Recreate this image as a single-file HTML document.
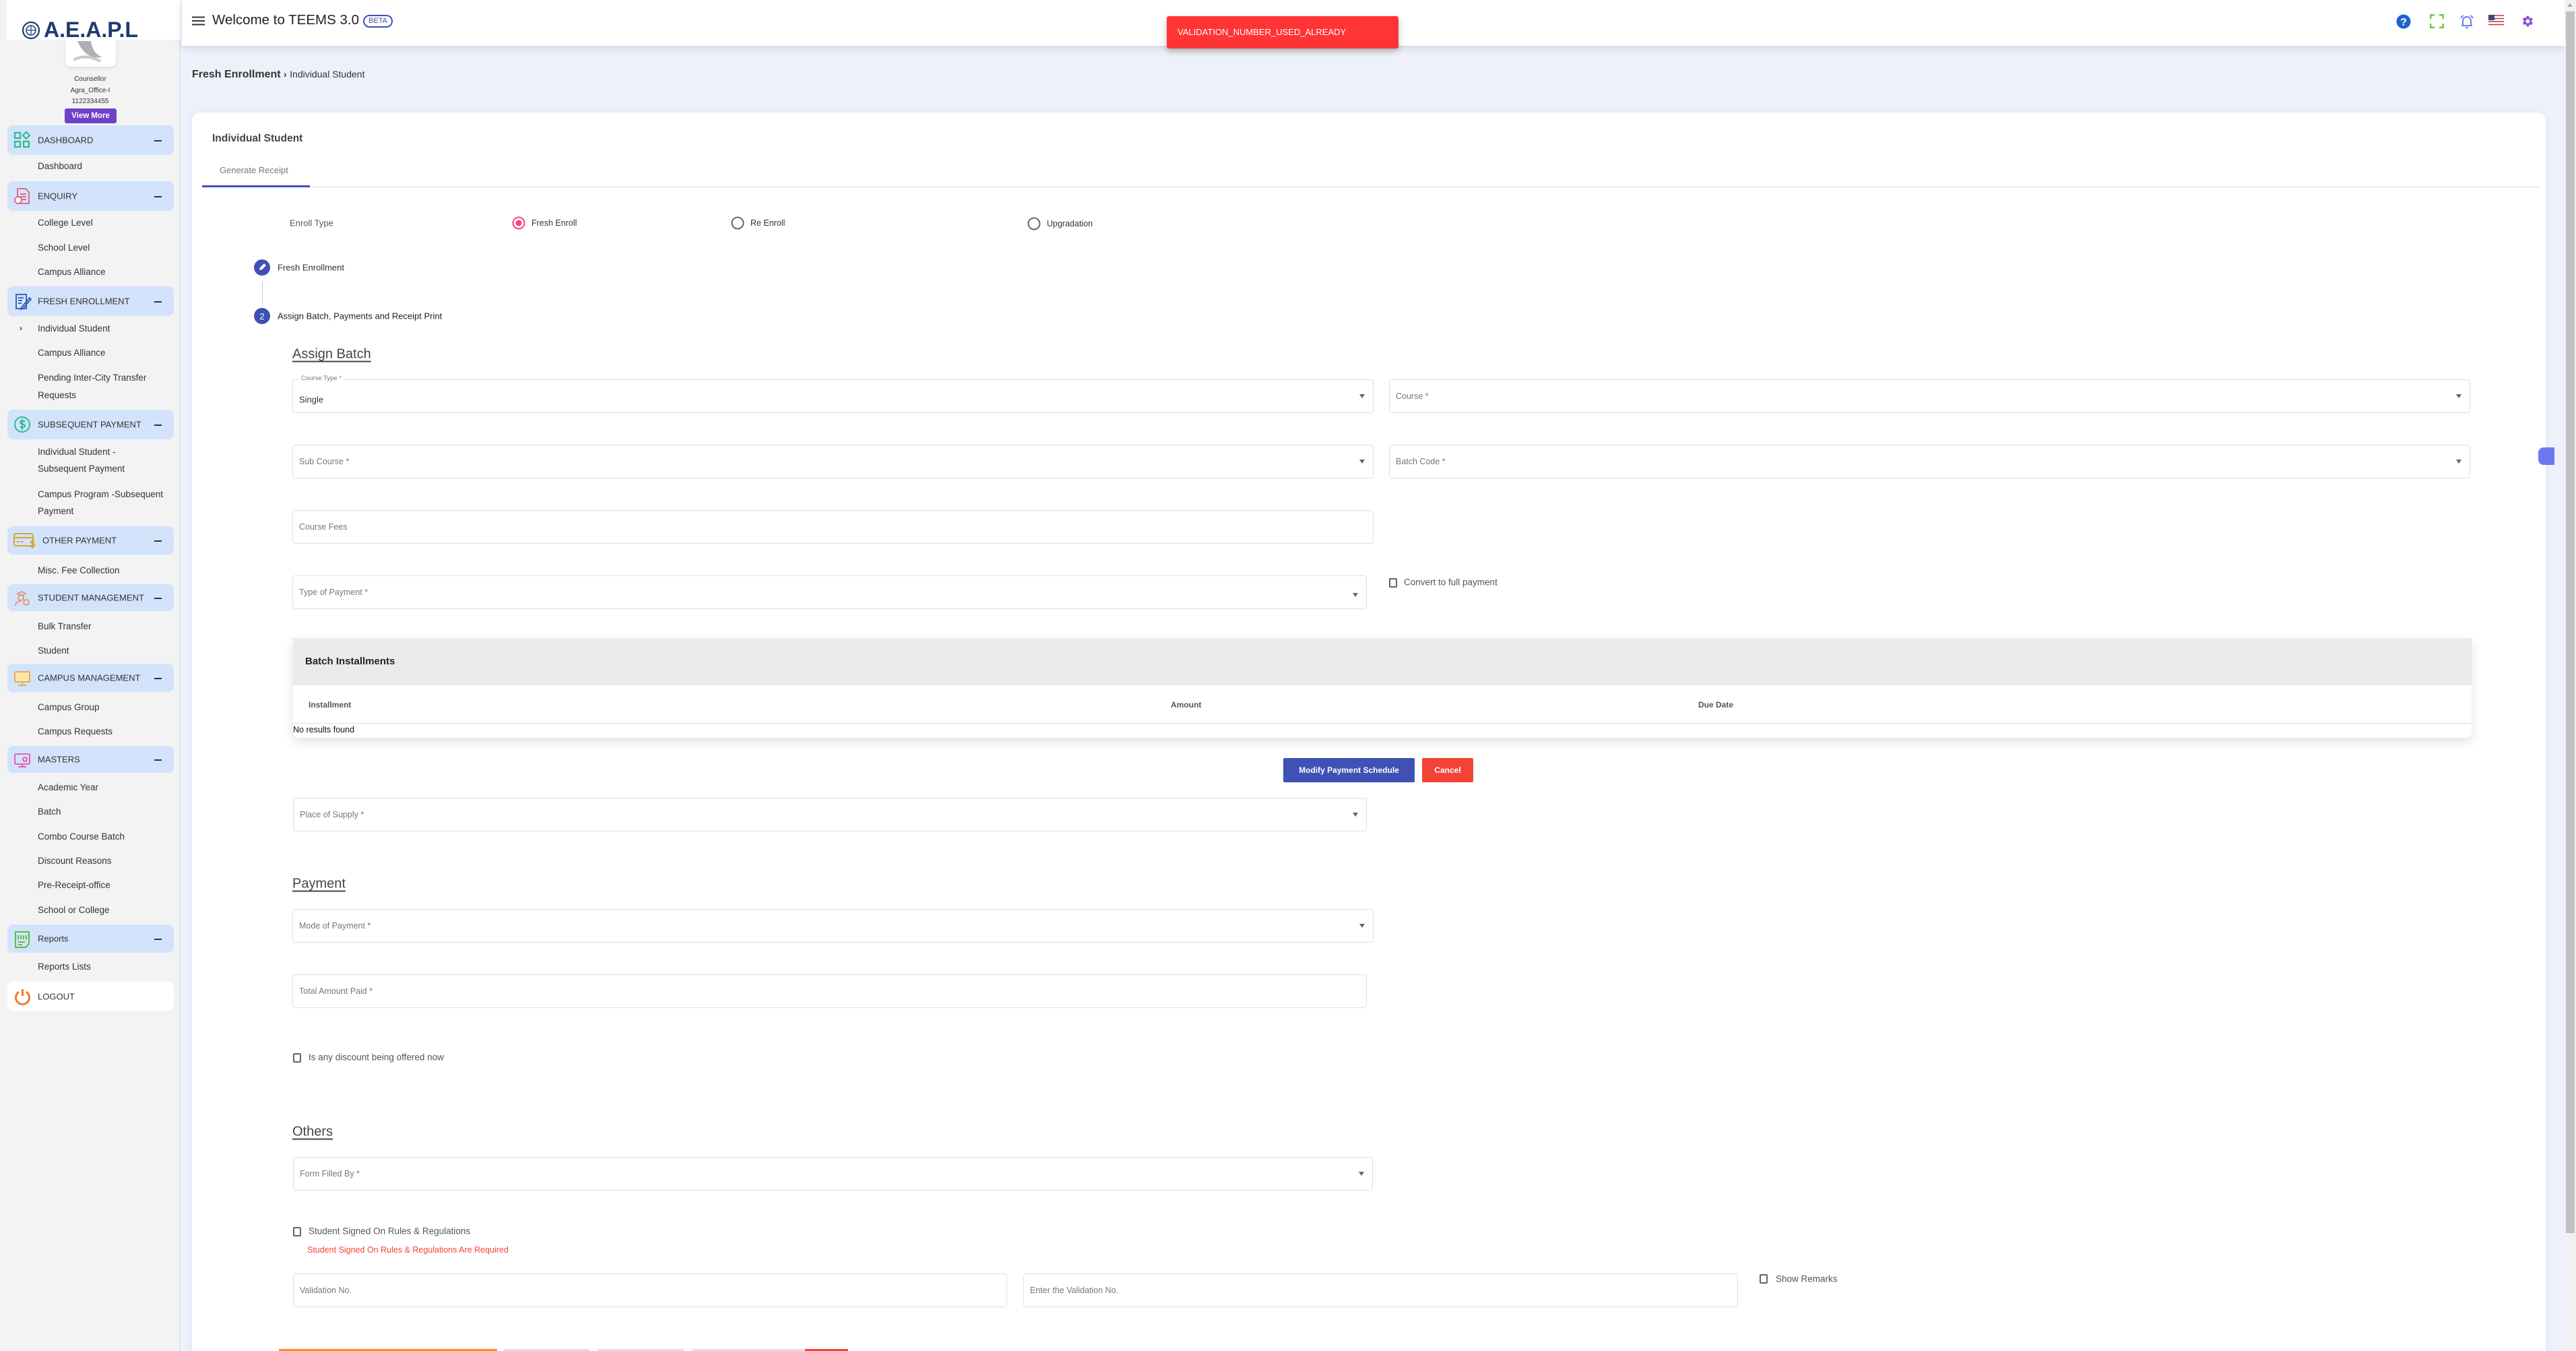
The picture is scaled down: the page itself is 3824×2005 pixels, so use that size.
<!DOCTYPE html>
<html><head><meta charset="utf-8">
<style>
*{box-sizing:border-box;margin:0;padding:0}
html{width:3824px;height:2005px;overflow:hidden}
body{width:3824px;height:2005px;overflow:hidden;position:relative;background:#eef1f9;font-family:"Liberation Sans",Arial,sans-serif;color:#333}
.a{position:absolute}
.sb{position:absolute;left:0;top:0;width:268px;height:2005px;background:#f3f3f3;border-right:2px solid #e3e6ef}
.hd{position:absolute;left:11px;width:247px;height:44px;background:#d3e3fc;border-radius:8px;font-size:13px;color:#333}
.hd span.t{position:absolute;left:45px;top:50%;transform:translateY(-50%)}
.hd span.m{position:absolute;right:18px;top:50%;width:11px;height:2px;background:#333}
.hd svg{position:absolute;left:9px;top:9px}
.it{position:absolute;left:56px;font-size:13.5px;color:#333;line-height:24px;transform:translateY(-12px)}
.f{position:absolute;border:1.5px solid #e0e0e0;border-radius:4px;background:#fff;height:50px}
.f .l{position:absolute;left:9px;top:50%;transform:translateY(-50%);font-size:12.5px;color:#777}
.f .ar{position:absolute;right:12px;top:21px;width:0;height:0;border-left:4px solid transparent;border-right:4px solid transparent;border-top:6px solid #666}
.cb{position:absolute;width:12px;height:14px;border:2px solid #666;border-radius:2px;background:#fff}
.ct{position:absolute;font-size:13px;color:#555;transform:translateY(-50%)}
h3.sec{position:absolute;left:434px;font-size:20px;font-weight:normal;color:#444;text-decoration:underline;text-underline-offset:4px;transform:translateY(-50%)}
</style></head><body>

<!-- Sidebar -->
<div class="sb"></div>
<div class="a" style="left:10px;top:0;width:258px;height:59px;background:#fff"></div>
<svg class="a" style="left:32px;top:31px" width="28" height="28" viewBox="0 0 28 28"><circle cx="14" cy="14" r="12" fill="none" stroke="#1e3a6e" stroke-width="2.2"/><circle cx="14" cy="14" r="7" fill="none" stroke="#1e3a6e" stroke-width="1.5"/><path d="M8 14h12M14 8v12" stroke="#1e3a6e" stroke-width="1.2"/></svg>
<div class="a" style="left:65px;top:26px;font-size:32px;font-weight:bold;color:#1e3a6e">A.E.A.P.L</div>
<div class="a" style="left:97px;top:59px;width:75px;height:40px;background:#fff;border-radius:0 0 8px 8px;box-shadow:0 2px 4px rgba(0,0,0,.1)"><svg width="75" height="40"><path d="M18 2 Q30 30 55 26 Q40 20 38 2 Z" fill="#aeb0b4"/><path d="M12 30 Q30 20 52 32" stroke="#c6c8cc" stroke-width="4" fill="none"/></svg></div>
<div class="a" style="left:0;width:268px;top:110px;text-align:center;font-size:10px;color:#333;line-height:16.5px">Counsellor<br>Agra_Office-I<br>1122334455</div>
<div class="a" style="left:96px;top:161px;width:77px;height:22px;background:#7040c8;border-radius:3px;color:#fff;font-size:11.5px;font-weight:bold;text-align:center;line-height:22px">View More</div>

<div class="hd" style="top:186px"><svg width="27" height="27" viewBox="0 0 27 27" fill="none" stroke="#2bbd8e" stroke-width="2.2"><rect x="2" y="2" width="8" height="8"/><rect x="2" y="15" width="8" height="8"/><rect x="15" y="15" width="8" height="8"/><path d="M19 1l5 5-5 5-5-5z"/></svg><span class="t">DASHBOARD</span><span class="m"></span></div>
<div class="it" style="top:247px">Dashboard</div>
<div class="hd" style="top:269px"><svg width="27" height="27" viewBox="0 0 27 27" fill="none" stroke="#e0607a" stroke-width="1.8"><path d="M6 2h12l5 5v17H6z"/><path d="M10 10h9M10 14h9M10 18h9"/><circle cx="7" cy="19" r="5" fill="#fff"/></svg><span class="t">ENQUIRY</span><span class="m"></span></div>
<div class="it" style="top:331px">College Level</div>
<div class="it" style="top:368px">School Level</div>
<div class="it" style="top:404px">Campus Alliance</div>
<div class="hd" style="top:425px"><svg width="27" height="27" viewBox="0 0 27 27" fill="none" stroke="#2b5ab0" stroke-width="1.8"><path d="M4 3h15v21H4z"/><path d="M7 8h8M7 12h6M7 16h5"/><path d="M12 22l12-14 2 2-12 14-3 1z"/></svg><span class="t">FRESH ENROLLMENT</span><span class="m"></span></div>
<div class="a" style="left:29px;top:480px;font-size:12px;font-weight:bold;color:#333">›</div>
<div class="it" style="top:488px">Individual Student</div>
<div class="it" style="top:524px">Campus Alliance</div>
<div class="it" style="top:561px">Pending Inter-City Transfer</div>
<div class="it" style="top:587px">Requests</div>
<div class="hd" style="top:608px"><svg width="27" height="27" viewBox="0 0 27 27" fill="none" stroke="#2bbd8e" stroke-width="2"><circle cx="13" cy="13" r="11"/><path d="M17 9c-1-2-7-2-7 1s7 2 7 5-6 3-7 1M13 5v16"/></svg><span class="t">SUBSEQUENT PAYMENT</span><span class="m"></span></div>
<div class="it" style="top:671px">Individual Student -</div>
<div class="it" style="top:696px">Subsequent Payment</div>
<div class="it" style="top:734px">Campus Program -Subsequent</div>
<div class="it" style="top:759px">Payment</div>
<div class="hd" style="top:781px;height:42px"><svg width="34" height="27" viewBox="0 0 34 27" fill="none" stroke="#d4a82a" stroke-width="2"><rect x="1" y="2" width="28" height="18" rx="3"/><path d="M1 8h28M5 14h4M11 14h4"/><path d="M31 14c-2-2-6-1-5 1s5 1 5 4-4 3-6 1M28 12v12"/></svg><span class="t" style="left:52px">OTHER PAYMENT</span><span class="m"></span></div>
<div class="it" style="top:847px">Misc. Fee Collection</div>
<div class="hd" style="top:867px;height:40px"><svg width="27" height="25" viewBox="0 0 27 25" fill="none" stroke="#e8875a" stroke-width="1.5"><path d="M6 5l6-3 6 3-6 3z"/><circle cx="11" cy="11" r="4"/><path d="M3 23c0-5 4-7 8-7"/><circle cx="19" cy="18" r="4"/></svg><span class="t">STUDENT MANAGEMENT</span><span class="m"></span></div>
<div class="it" style="top:930px">Bulk Transfer</div>
<div class="it" style="top:966px">Student</div>
<div class="hd" style="top:985px;height:42px"><svg width="27" height="27" viewBox="0 0 27 27" fill="#f3c550" stroke="#e0a020" stroke-width="1.5"><rect x="2" y="3" width="22" height="15" rx="1" fill="#fbe6a8"/><path d="M13 18v4M7 23h12" fill="none"/></svg><span class="t">CAMPUS MANAGEMENT</span><span class="m"></span></div>
<div class="it" style="top:1050px">Campus Group</div>
<div class="it" style="top:1086px">Campus Requests</div>
<div class="hd" style="top:1107px;height:40px"><svg width="27" height="25" viewBox="0 0 27 25" fill="none" stroke="#e040a0" stroke-width="1.6"><rect x="2" y="3" width="22" height="15" rx="2"/><path d="M13 18v4M7 22h12"/><circle cx="17" cy="11" r="3"/></svg><span class="t">MASTERS</span><span class="m"></span></div>
<div class="it" style="top:1169px">Academic Year</div>
<div class="it" style="top:1205px">Batch</div>
<div class="it" style="top:1242px">Combo Course Batch</div>
<div class="it" style="top:1278px">Discount Reasons</div>
<div class="it" style="top:1314px">Pre-Receipt-office</div>
<div class="it" style="top:1351px">School or College</div>
<div class="hd" style="top:1372px;height:42px"><svg width="27" height="27" viewBox="0 0 27 27" fill="none" stroke="#5cc040" stroke-width="2"><path d="M3 2h20v18l-5 5H3z"/><path d="M7 7v6M11 7v6M15 7v6M19 7v6M7 17h10M7 21h6"/></svg><span class="t">Reports</span><span class="m"></span></div>
<div class="it" style="top:1435px">Reports Lists</div>
<div class="hd" style="top:1457px;height:43px;background:#fff"><svg width="27" height="27" viewBox="0 0 27 27" fill="none" stroke="#f07a25" stroke-width="3"><path d="M8 6a10 10 0 1 0 11 0"/><path d="M13.5 2v10"/></svg><span class="t">LOGOUT</span></div>

<!-- Header -->
<div class="a" style="left:270px;top:0;width:3537px;height:68px;background:#fff;box-shadow:0 3px 10px rgba(60,80,140,.18)"></div>
<svg class="a" style="left:285px;top:24px" width="19" height="14"><path d="M0 1.5h19M0 7h19M0 12.5h19" stroke="#333" stroke-width="2"/></svg>
<div class="a" style="left:315px;top:18px;font-size:20.5px;color:#222">Welcome to TEEMS 3.0</div>
<div class="a" style="left:539px;top:22px;width:44px;height:19px;border:2px solid #3f51b5;border-radius:10px;font-size:11px;color:#3f51b5;text-align:center;line-height:15px">BETA</div>
<svg class="a" style="left:3557px;top:21px" width="22" height="22"><circle cx="11" cy="11" r="10.5" fill="#1f62d0"/><text x="11" y="17" font-size="16" font-weight="bold" fill="#fff" text-anchor="middle" font-family="Liberation Sans">?</text></svg>
<svg class="a" style="left:3607px;top:21px" width="21" height="21" fill="none" stroke="#6ccc3c" stroke-width="3"><path d="M1 7V1h6M14 1h6v6M20 14v6h-6M7 20H1v-6"/></svg>
<svg class="a" style="left:3651px;top:21px" width="22" height="22" fill="none" stroke="#6a7ff0" stroke-width="2"><path d="M5 17V10a6 6 0 0 1 12 0v7zM3 17h16M9 20h4"/><path d="M2 6a9 9 0 0 1 4-4M20 6a9 9 0 0 0-4-4"/></svg>
<svg class="a" style="left:3694px;top:22px" width="23" height="16"><rect width="23" height="16" fill="#fff"/><path d="M0 1h23M0 5.5h23M0 10h23M0 14.5h23" stroke="#c03040" stroke-width="1.6"/><rect width="9" height="8" fill="#3c4478"/></svg>
<svg class="a" style="left:3741px;top:21px" width="21" height="21" viewBox="0 0 24 24"><path fill="#8a4fd0" d="M19.4 13a7.5 7.5 0 0 0 0-2l2.1-1.6-2-3.5-2.5 1a7.5 7.5 0 0 0-1.7-1L15 3h-4l-.4 2.6a7.5 7.5 0 0 0-1.7 1l-2.5-1-2 3.5L6.6 11a7.5 7.5 0 0 0 0 2l-2.1 1.6 2 3.5 2.5-1a7.5 7.5 0 0 0 1.7 1L11 21h4l.4-2.6a7.5 7.5 0 0 0 1.7-1l2.5 1 2-3.5zM13 15.5a3.5 3.5 0 1 1 0-7 3.5 3.5 0 0 1 0 7z"/></svg>

<!-- Toast -->
<div class="a" style="left:1732px;top:24px;width:344px;height:48px;background:#ff3434;border-radius:3px;box-shadow:0 4px 10px rgba(0,0,0,.25);color:#fff;font-size:13px;line-height:48px;padding-left:16px">VALIDATION_NUMBER_USED_ALREADY</div>

<!-- Breadcrumb -->
<div class="a" style="left:285px;top:102px;font-size:16px;font-weight:bold;color:#333">Fresh Enrollment <span style="font-size:14px">›</span> <span style="font-weight:normal;font-size:14px">Individual Student</span></div>

<!-- Card -->
<div class="a" style="left:285px;top:167px;width:3494px;height:1838px;background:#fff;border-radius:12px 12px 0 0;box-shadow:0 2px 10px rgba(60,80,140,.08)"></div>
<div class="a" style="left:315px;top:197px;font-size:15.5px;font-weight:bold;color:#444">Individual Student</div>
<div class="a" style="left:326px;top:245px;font-size:13px;color:#777">Generate Receipt</div>
<div class="a" style="left:300px;top:277px;width:3470px;height:1px;background:#ddd"></div>
<div class="a" style="left:300px;top:275px;width:160px;height:3px;background:#3f51b5"></div>

<div class="ct" style="left:430px;top:331px">Enroll Type</div>
<svg class="a" style="left:760px;top:321px" width="20" height="20"><circle cx="10" cy="10" r="8.5" fill="none" stroke="#ff4081" stroke-width="2"/><circle cx="10" cy="10" r="4.5" fill="#ff4081"/></svg>
<div class="ct" style="left:789px;top:331px;font-size:12.5px;color:#333">Fresh Enroll</div>
<svg class="a" style="left:1085px;top:321px" width="20" height="20"><circle cx="10" cy="10" r="8.5" fill="none" stroke="#666" stroke-width="2"/></svg>
<div class="ct" style="left:1114px;top:331px;font-size:12.5px;color:#333">Re Enroll</div>
<svg class="a" style="left:1525px;top:322px" width="20" height="20"><circle cx="10" cy="10" r="8.5" fill="none" stroke="#666" stroke-width="2"/></svg>
<div class="ct" style="left:1554px;top:332px;font-size:12.5px;color:#333">Upgradation</div>

<!-- Stepper -->
<svg class="a" style="left:377px;top:385px" width="24" height="24"><circle cx="12" cy="12" r="12" fill="#3f51b5"/><path d="M8 16l1-4 6-6 3 3-6 6z" fill="#fff"/></svg>
<div class="ct" style="left:412px;top:397px;font-size:13px;color:#333">Fresh Enrollment</div>
<div class="a" style="left:389px;top:418px;width:1px;height:32px;background:#ccc"></div>
<svg class="a" style="left:377px;top:457px" width="24" height="24"><circle cx="12" cy="12" r="12" fill="#3f51b5"/><text x="12" y="17" font-size="13" fill="#fff" text-anchor="middle" font-family="Liberation Sans">2</text></svg>
<div class="ct" style="left:412px;top:469px;font-size:13px;color:#222">Assign Batch, Payments and Receipt Print</div>

<h3 class="sec" style="top:526px">Assign Batch</h3>

<div class="f" style="left:434px;top:563px;width:1605px"><div class="a" style="left:9px;top:-8px;background:#fff;padding:0 3px;font-size:9.5px;color:#777">Course Type *</div><div class="l" style="top:29px;color:#333;font-size:13px">Single</div><span class="ar"></span></div>
<div class="f" style="left:2062px;top:563px;width:1605px"><div class="l">Course *</div><span class="ar"></span></div>
<div class="f" style="left:434px;top:660px;width:1605px"><div class="l">Sub Course *</div><span class="ar"></span></div>
<div class="f" style="left:2062px;top:660px;width:1605px"><div class="l">Batch Code *</div><span class="ar"></span></div>
<div class="f" style="left:434px;top:757px;width:1605px"><div class="l">Course Fees</div></div>
<div class="f" style="left:434px;top:854px;width:1595px"><div class="l">Type of Payment *</div><span class="ar" style="top:25px"></span></div>
<div class="cb" style="left:2062px;top:858px"></div>
<div class="ct" style="left:2084px;top:864px;font-size:13.5px">Convert to full payment</div>

<!-- Batch Installments -->
<div class="a" style="left:435px;top:947px;width:3234px;height:148px;background:#fff;border-radius:0 0 8px 8px;box-shadow:0 6px 16px rgba(0,0,0,.12)">
  <div class="a" style="left:0;top:0;width:100%;height:70px;background:#ebebed"></div>
  <div class="a" style="left:18px;top:26px;font-size:15px;font-weight:bold;color:#222">Batch Installments</div>
  <div class="a" style="left:23px;top:92px;font-size:12px;font-weight:bold;color:#555">Installment</div>
  <div class="a" style="left:1303px;top:92px;font-size:12px;font-weight:bold;color:#555">Amount</div>
  <div class="a" style="left:2086px;top:92px;font-size:12px;font-weight:bold;color:#555">Due Date</div>
  <div class="a" style="left:0;top:126px;width:100%;height:1px;background:#ddd"></div>
  <div class="a" style="left:0;top:129px;font-size:12.5px;color:#111">No results found</div>
</div>
<div class="a" style="left:1905px;top:1125px;width:195px;height:36px;background:#3f51b5;border-radius:2px;color:#fff;font-size:12px;font-weight:bold;text-align:center;line-height:36px">Modify Payment Schedule</div>
<div class="a" style="left:2111px;top:1125px;width:76px;height:36px;background:#f44336;border-radius:2px;color:#fff;font-size:12px;font-weight:bold;text-align:center;line-height:36px">Cancel</div>

<div class="f" style="left:435px;top:1184px;width:1594px"><div class="l">Place of Supply *</div><span class="ar"></span></div>

<h3 class="sec" style="top:1312px">Payment</h3>
<div class="f" style="left:434px;top:1349px;width:1605px"><div class="l">Mode of Payment *</div><span class="ar"></span></div>
<div class="f" style="left:434px;top:1446px;width:1595px"><div class="l">Total Amount Paid *</div></div>
<div class="cb" style="left:435px;top:1563px"></div>
<div class="ct" style="left:458px;top:1569px;font-size:13.5px">Is any discount being offered now</div>

<h3 class="sec" style="top:1680px">Others</h3>
<div class="f" style="left:435px;top:1717px;width:1603px"><div class="l">Form Filled By *</div><span class="ar"></span></div>
<div class="cb" style="left:435px;top:1821px"></div>
<div class="ct" style="left:458px;top:1827px;font-size:13.5px">Student Signed On Rules &amp; Regulations</div>
<div class="ct" style="left:456px;top:1855px;font-size:12.5px;color:#f44336">Student Signed On Rules &amp; Regulations Are Required</div>
<div class="f" style="left:435px;top:1890px;width:1060px"><div class="l">Validation No.</div></div>
<div class="f" style="left:1519px;top:1890px;width:1061px"><div class="l">Enter the Validation No.</div></div>
<div class="cb" style="left:2612px;top:1891px"></div>
<div class="ct" style="left:2636px;top:1898px;font-size:13.5px">Show Remarks</div>

<div class="a" style="left:414px;top:2002px;width:324px;height:3px;background:#ff8a1c"></div>
<div class="a" style="left:748px;top:2002px;width:127px;height:3px;background:#ddd"></div>
<div class="a" style="left:888px;top:2002px;width:127px;height:3px;background:#ddd"></div>
<div class="a" style="left:1028px;top:2002px;width:167px;height:3px;background:#ddd"></div>
<div class="a" style="left:1195px;top:2002px;width:64px;height:3px;background:#f44336"></div>

<!-- Scrollbar -->
<div class="a" style="left:3807px;top:0;width:17px;height:2005px;background:#f1f1f1"></div>
<div class="a" style="left:3809px;top:17px;width:13px;height:1813px;background:#c1c1c1"></div>
<div class="a" style="left:3811px;top:5px;width:0;height:0;border-left:4px solid transparent;border-right:4px solid transparent;border-bottom:5px solid #a3a3a3"></div>
<div class="a" style="left:3768px;top:664px;width:24px;height:26px;background:#6b79f0;border-radius:8px 0 0 8px"></div>
</body></html>
